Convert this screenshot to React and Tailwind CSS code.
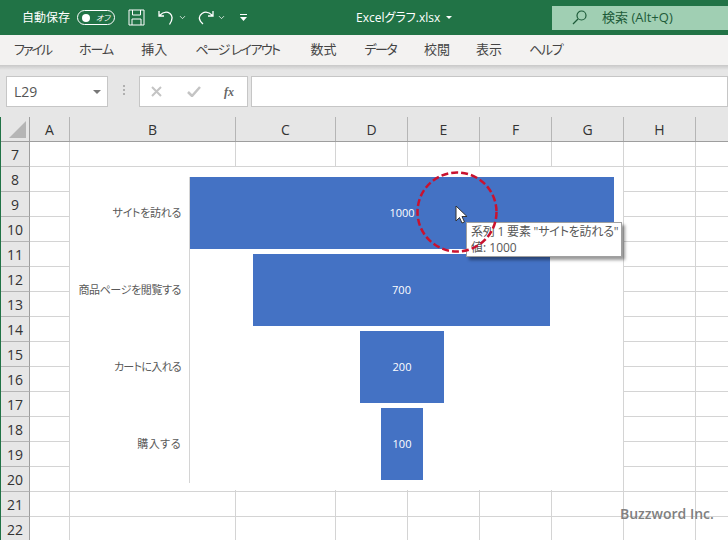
import React from 'react';
import { ChevronDown } from 'lucide-react';

const font = { fontFamily: '"Open Sans", "Noto Sans CJK JP", sans-serif', fontFeatureSettings: '"palt"' };

const columns = [
  { name: 'A', width: 'w-[40px]' },
  { name: 'B', width: 'w-[166px]' },
  { name: 'C', width: 'w-[100px]' },
  { name: 'D', width: 'w-[72px]' },
  { name: 'E', width: 'w-[72px]' },
  { name: 'F', width: 'w-[72px]' },
  { name: 'G', width: 'w-[72px]' },
  { name: 'H', width: 'w-[72px]' },
  { name: '', width: 'w-[72px]' },
];

const rows = [7, 8, 9, 10, 11, 12, 13, 14, 15, 16, 17, 18, 19, 20, 21, 22];

const menus = [
  { name: 'ファイル', spacing: 'tracking-[-2px]' },
  { name: 'ホーム', spacing: 'tracking-[-1px]' },
  { name: '挿入', spacing: '' },
  { name: 'ページ レイアウト', spacing: 'tracking-[-1.600px]' },
  { name: '数式', spacing: 'ml-[3px]' },
  { name: 'データ', spacing: 'tracking-[-1.600px]' },
  { name: '校閲', spacing: '' },
  { name: '表示', spacing: '-ml-[2px]' },
  { name: 'ヘルプ', spacing: 'tracking-[-1.300px] -ml-[1px]' },
];

const funnel = [
  { label: 'サイトを訪れる', value: 1000, bar: 'w-[424px]', spacing: 'tracking-[-0.300px]' },
  { label: '商品ページを閲覧する', value: 700, bar: 'ml-[63px] w-[297px]', spacing: 'tracking-[-0.400px]' },
  { label: 'カートに入れる', value: 200, bar: 'ml-[170px] w-[84px]', spacing: 'tracking-[-0.700px]' },
  { label: '購入する', value: 100, bar: 'ml-[191px] w-[42px]', spacing: 'tracking-[0.500px]' },
];

const TitleBar = () => (
  <div className="flex h-[35px] items-center bg-[#217346] text-white">
    <span className="ml-[22px] w-[48px] whitespace-nowrap text-[12px]">自動保存</span>
    <div className="ml-[7px] flex h-[15px] w-[38px] items-center justify-between rounded-full border border-white px-[4px]">
      <span className="h-[8px] w-[8px] rounded-full bg-white"></span>
      <span className="text-[8px] italic leading-none">オフ</span>
    </div>
    <svg className="ml-[13px]" width="17" height="17" viewBox="0 0 17 17" fill="none" stroke="white" strokeWidth="1">
      <path d="M1 1h15v15H1zM4.500 1v5h8V1M4 16v-6h9v6" />
    </svg>
    <svg className="ml-[13px]" width="17" height="17" viewBox="0 0 17 17" fill="none" stroke="white" strokeWidth="1.300">
      <path d="M1 2v5h5M1.500 6.500C5 3 9 2.500 12 4.500c3 2.500 2.500 6.500-.5 11" />
    </svg>
    <ChevronDown className="ml-[3px]" size={9} strokeWidth={2} />
    <svg className="ml-[10px]" width="17" height="17" viewBox="0 0 17 17" fill="none" stroke="white" strokeWidth="1.300">
      <path d="M16 2v5h-5M15.500 6.500C12 3 8 2.500 5 4.500c-3.500 2.500-4 6 1 10.500" />
    </svg>
    <ChevronDown className="ml-[3px]" size={9} strokeWidth={2} />
    <svg className="ml-[13px]" width="9" height="9" viewBox="0 0 9 9" fill="white">
      <path d="M1 1h7v1H1zM1 4h7L4.500 8z" />
    </svg>
    <span className="ml-[108px] w-[82px] whitespace-nowrap text-[12px]">Excelグラフ.xlsx</span>
    <svg className="ml-[8px]" width="6" height="3" viewBox="0 0 6 3" fill="white">
      <path d="M0 0h6L3 3z" />
    </svg>
    <div className="ml-[100px] flex h-[24px] w-[176px] items-center bg-[#a0cfb3] text-[#1d5b39]">
      <svg className="ml-[20px]" width="15" height="15" viewBox="0 0 15 15" fill="none" stroke="#1d5b39" strokeWidth="1.200">
        <circle cx="9.500" cy="5.500" r="4.500" />
        <path d="M6 9l-5 5" />
      </svg>
      <span className="ml-[15px] whitespace-nowrap text-[13px]">検索 (Alt+Q)</span>
    </div>
  </div>
);

const MenuBar = () => (
  <div className="flex h-[30px] items-center gap-[28px] bg-[#f3f2f1] pl-[14px] text-[13px] text-[#444444]">
    {menus.map((m) => (
      <span key={m.name} className={`${m.spacing} whitespace-nowrap`}>{m.name}</span>
    ))}
  </div>
);

const FormulaBar = () => (
  <div className="flex h-[47px] items-start bg-[#e6e6e6] pt-[6px]">
    <div className="ml-[6px] flex h-[31px] w-[102px] items-center justify-between border border-[#c6c6c6] bg-white pl-[7px] pr-[6px] text-[14px] text-[#555555]">
      <span>L29</span>
      <span className="h-0 w-0 border-x-[4px] border-t-[4px] border-x-transparent border-t-[#777777]"></span>
    </div>
    <span className="ml-[12px] mt-[9px] flex w-[8px] flex-col items-center gap-[2px]">
      <i className="h-[2px] w-[2px] bg-[#b0b0b0]"></i>
      <i className="h-[2px] w-[2px] bg-[#b0b0b0]"></i>
      <i className="h-[2px] w-[2px] bg-[#b0b0b0]"></i>
    </span>
    <div className="ml-[11px] flex h-[31px] w-[109px] items-center border border-[#c6c6c6] bg-white">
      <svg className="ml-[11px]" width="11" height="11" viewBox="0 0 11 11" stroke="#c4c4c4" strokeWidth="2" fill="none">
        <path d="M1 1l9 9M10 1l-9 9" />
      </svg>
      <svg className="ml-[25px]" width="14" height="11" viewBox="0 0 14 11" stroke="#c4c4c4" strokeWidth="2.500" fill="none">
        <path d="M1 6l4 4 8-9" />
      </svg>
      <span className="ml-[23px] text-[12px] font-bold italic text-[#666666] [font-family:'Liberation_Serif',serif]">fx</span>
    </div>
    <div className="ml-[3px] h-[31px] flex-1 border border-[#c6c6c6] bg-white"></div>
  </div>
);

const Grid = () => (
  <div className="flex h-[423px] flex-col overflow-hidden border-l border-l-[#217346] bg-white text-[#333333]">
    <div className="flex h-[25px] shrink-0 border-b border-b-[#9e9e9e] bg-[#e6e6e6] text-[14px]">
      <div className="flex h-full w-[29px] shrink-0 items-end justify-end border-r border-r-[#9e9e9e] pb-[3px] pr-[3px]">
        <span className="h-0 w-0 border-b-[17px] border-l-[17px] border-b-[#b5b5b5] border-l-transparent"></span>
      </div>
      {columns.map((c) => (
        <div key={c.name} className={`${c.width} flex shrink-0 items-center justify-center border-r border-r-[#b5b5b5]`}>
          {c.name}
        </div>
      ))}
    </div>
    {rows.map((r) => (
      <div key={r} className="flex h-[25px] shrink-0">
        <div className="flex w-[29px] shrink-0 items-center justify-center border-r border-b border-r-[#9e9e9e] border-b-[#b5b5b5] bg-[#e6e6e6] text-[14px]">
          {r}
        </div>
        {columns.map((c) => (
          <div key={c.name} className={`${c.width} shrink-0 border-r border-b border-[#d4d4d4]`}></div>
        ))}
      </div>
    ))}
  </div>
);

const Chart = () => (
  <div className="absolute left-[70px] top-[167px] flex h-[323px] w-[553px] flex-col gap-[5px] bg-white pt-[10px]">
    <div className="absolute bottom-[7px] left-[119px] top-[10px] w-px bg-[#d4d4d4]"></div>
    {funnel.map((f) => (
      <div key={f.label} className="flex h-[72px] shrink-0 items-center">
        <span className={`${f.spacing} w-[111px] shrink-0 whitespace-nowrap text-right text-[11px] text-[#595959]`}>{f.label}</span>
        <div className="ml-[9px] flex w-[424px]">
          <div className={`${f.bar} flex h-[72px] items-center justify-center bg-[#4472c4] text-[11px] font-medium text-white`}>
            {f.value}
          </div>
        </div>
      </div>
    ))}
  </div>
);

const Annotation = () => (
  <>
    <div className="absolute left-[466px] top-[222px] h-[35px] w-[156px] border border-[#a0a0a0] bg-white pl-[4px] pt-[1px] text-[12px] leading-[16px] text-[#575757] shadow-[3px_3px_3px_rgba(0,0,0,0.4)]">
      <div className="whitespace-nowrap tracking-[-0.200px]">系列 1 要素 "サイトを訪れる"</div>
      <div>値: 1000</div>
    </div>
    <svg className="absolute left-[415px] top-[170px]" width="84" height="84" viewBox="0 0 84 84" fill="none">
      <circle cx="42" cy="42" r="39.500" stroke="#c9122f" strokeWidth="2.500" strokeDasharray="7 3" />
    </svg>
    <svg className="absolute left-[455px] top-[205px]" width="13" height="20" viewBox="0 0 13 20">
      <path d="M1 1v15l3.500-3.500L7 18l2.500-1-2.500-5.500h5z" fill="white" stroke="#333333" strokeWidth="1" />
    </svg>
  </>
);

export default function App() {
  return (
    <div className="relative h-[540px] w-[728px] overflow-hidden" style={font}>
      <TitleBar />
      <MenuBar />
      <div className="h-[5px] bg-gradient-to-b from-[#c8c8c8] to-[#e6e6e6]"></div>
      <FormulaBar />
      <Grid />
      <Chart />
      <Annotation />
      <span className="absolute left-[620px] top-[503px] text-[14px] font-semibold text-[#808080]">Buzzword Inc.</span>
    </div>
  );
}
